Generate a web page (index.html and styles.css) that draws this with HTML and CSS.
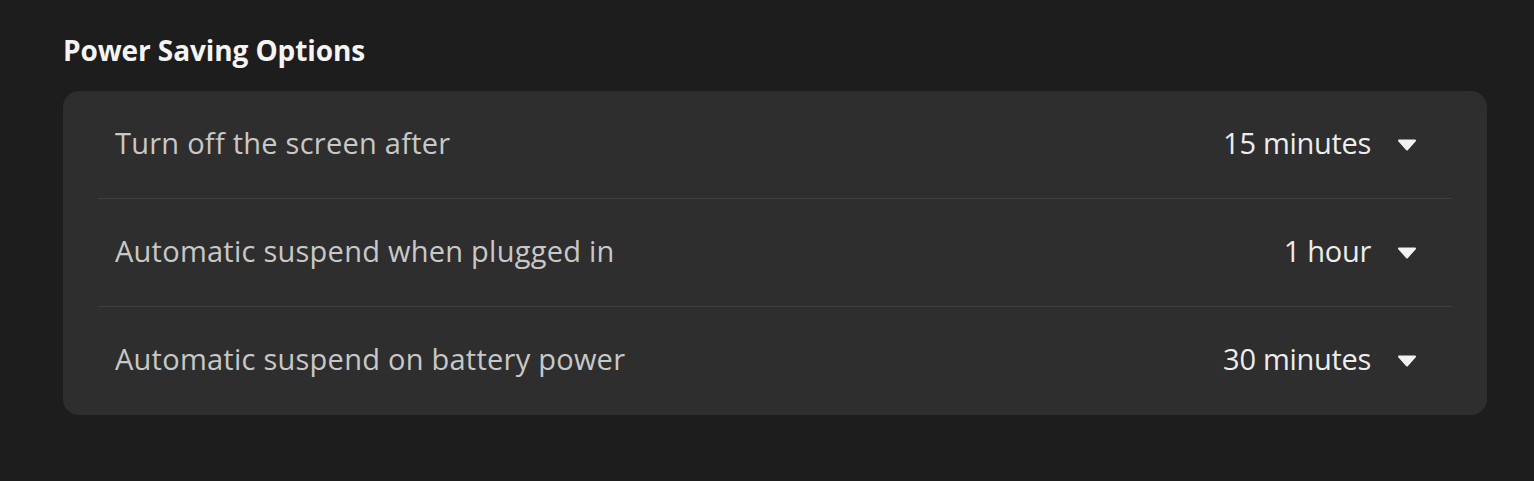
FILE: index.html
```html
<!DOCTYPE html>
<html lang="en">
<head>
    <meta charset="UTF-8">
    <meta name="viewport" content="width=device-width, initial-scale=1.0">
    <title>Power Saving Options</title>
    <link rel="stylesheet" href="styles.css">
</head>
<body>
    <section class="group">
        <h2 class="group-title">Power Saving Options</h2>

        <div class="card">
            <div class="row">
                <span class="row-label">Turn off the screen after</span>
                <div class="row-value">
                    <span>15 minutes</span>
                    <svg class="arrow" width="20" height="12" viewBox="0 0 20 12"><path d="M2 1.5 H18 L10 10.5 Z" fill="currentColor" stroke="currentColor" stroke-width="2" stroke-linejoin="round"/></svg>
                </div>
            </div>
            <div class="row">
                <span class="row-label">Automatic suspend when plugged in</span>
                <div class="row-value">
                    <span>1 hour</span>
                    <svg class="arrow" width="20" height="12" viewBox="0 0 20 12"><path d="M2 1.5 H18 L10 10.5 Z" fill="currentColor" stroke="currentColor" stroke-width="2" stroke-linejoin="round"/></svg>
                </div>
            </div>
            <div class="row">
                <span class="row-label">Automatic suspend on battery power</span>
                <div class="row-value">
                    <span>30 minutes</span>
                    <svg class="arrow" width="20" height="12" viewBox="0 0 20 12"><path d="M2 1.5 H18 L10 10.5 Z" fill="currentColor" stroke="currentColor" stroke-width="2" stroke-linejoin="round"/></svg>
                </div>
            </div>
        </div>
    </section>
</body>
</html>
```

FILE: styles.css
```css
body {
    margin: 0;
    background: #1d1d1d;
    font-family: 'Open Sans', 'Noto Sans', sans-serif;
    color: #ececec;
}

.group {
    padding: 30px 47px 0 63px;
}

.group-title {
    margin: 0 0 21px;
    font-size: 28px;
    font-weight: 700;
    line-height: 40px;
    color: #f4f4f4;
    letter-spacing: -0.1px;
}

.card {
    background: #2e2e2e;
    border-radius: 16px;
    padding: 0 35px 1px;
}

.row {
    display: flex;
    align-items: center;
    justify-content: space-between;
    height: 107px;
    padding: 0 35px 0 17px;
    border-bottom: 1px solid #3f3f3f;
}

.row:last-child {
    border-bottom: none;
}

.row-label {
    font-size: 29px;
    line-height: 40px;
    margin-top: -4px;
    color: #c8c8c8;
    letter-spacing: 0.25px;
}

.row-value {
    display: flex;
    align-items: center;
    gap: 26px;
    font-size: 29px;
    line-height: 40px;
    color: #ededed;
    letter-spacing: -0.3px;
}

.row-value span {
    margin-top: -4px;
}

.arrow {
    display: block;
    color: #f2f2f2;
}
```
